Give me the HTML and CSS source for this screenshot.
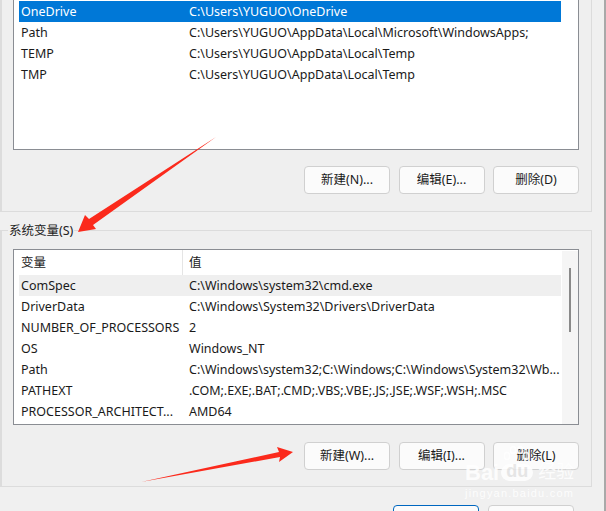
FILE: index.html
```html
<!DOCTYPE html>
<html lang="zh">
<head>
<meta charset="utf-8">
<title>环境变量</title>
<link rel="stylesheet" href="styles.css">
</head>
<body>
<div class="dialog">
  <section class="group group-user">
    <div class="list list-user">
      <div class="row selected"><span class="name">OneDrive</span><span class="value">C:\Users\YUGUO\OneDrive</span></div>
      <div class="row"><span class="name">Path</span><span class="value">C:\Users\YUGUO\AppData\Local\Microsoft\WindowsApps;</span></div>
      <div class="row"><span class="name">TEMP</span><span class="value">C:\Users\YUGUO\AppData\Local\Temp</span></div>
      <div class="row"><span class="name">TMP</span><span class="value">C:\Users\YUGUO\AppData\Local\Temp</span></div>
    </div>
    <div class="actions">
      <button class="btn">新建(N)...</button>
      <button class="btn">编辑(E)...</button>
      <button class="btn">删除(D)</button>
    </div>
  </section>
  <section class="group group-system">
    <div class="legend">系统变量(S)</div>
    <div class="list list-system">
      <div class="rows">
        <div class="header"><span class="name">变量</span><span class="value">值</span></div>
        <div class="row hover"><span class="name">ComSpec</span><span class="value">C:\Windows\system32\cmd.exe</span></div>
        <div class="row"><span class="name">DriverData</span><span class="value">C:\Windows\System32\Drivers\DriverData</span></div>
        <div class="row"><span class="name">NUMBER_OF_PROCESSORS</span><span class="value">2</span></div>
        <div class="row"><span class="name">OS</span><span class="value">Windows_NT</span></div>
        <div class="row"><span class="name">Path</span><span class="value">C:\Windows\system32;C:\Windows;C:\Windows\System32\Wb...</span></div>
        <div class="row"><span class="name">PATHEXT</span><span class="value">.COM;.EXE;.BAT;.CMD;.VBS;.VBE;.JS;.JSE;.WSF;.WSH;.MSC</span></div>
        <div class="row"><span class="name">PROCESSOR_ARCHITECT...</span><span class="value">AMD64</span></div>
      </div>
      <div class="scrollbar"><div class="thumb"></div></div>
    </div>
    <div class="actions">
      <button class="btn">新建(W)...</button>
      <button class="btn">编辑(I)...</button>
      <button class="btn">删除(L)</button>
    </div>
  </section>
  <div class="footer">
    <button class="btn primary"></button>
    <button class="btn"></button>
  </div>
</div>
<svg class="arrows" width="606" height="511" viewBox="0 0 606 511" aria-hidden="true">
  <path class="arrow" d="M216 137 L89 219 L85 215 L78 232 L96 229 L93 225 Z"/>
  <path class="arrow" d="M141 482 L279 452 L277 447 L293 452 L279 462 L280 457 Z"/>
</svg>
<div class="watermark" aria-hidden="true">
  <svg class="paw" width="30" height="24" viewBox="0 0 30 24"><g fill="none" stroke="#fff" stroke-width="1.6"><ellipse cx="6" cy="10" rx="2.6" ry="3.6"/><ellipse cx="12" cy="4" rx="2.6" ry="3.4"/><ellipse cx="19" cy="4" rx="2.6" ry="3.4"/><ellipse cx="25" cy="10" rx="2.6" ry="3.6"/></g></svg>
  <div class="wm-main"><span class="wm-bai">Bai</span><span class="wm-du">du</span><span class="wm-cn">经验</span></div>
  <div class="wm-sub">jingyan.baidu.com</div>
</div>
</body>
</html>
```
FILE: styles.css
```css
* { box-sizing: border-box; }
html, body { margin: 0; padding: 0; }
body {
  width: 606px;
  height: 511px;
  overflow: hidden;
  background: #f0f0f0;
  font-family: "Noto Sans", "Noto Sans CJK SC", sans-serif;
  font-size: 12.5px;
  color: #1a1a1a;
  position: relative;
}
.dialog {
  width: 606px;
  height: 511px;
  display: flex;
  flex-direction: column;
  border-right: 2px solid #a9a9a9;
}
.group {
  flex: none;
  width: 592px;
  background: #efefef;
  border: 1px solid #dcdcdc;
  border-left-width: 2px;
  padding: 0 12px 0 11px;
  position: relative;
}
.group-user { height: 213px; margin-top: -1px; border-top: 0; }
.group-system { height: 257px; margin-top: 18px; padding-top: 18px; }
.legend {
  position: absolute;
  left: 6px;
  top: -7px;
  background: #f0f0f0;
  padding: 0 1px;
  line-height: 14px;
  color: #222;
}
.list { width: 566px; background: #fff; border: 1px solid #8a8d93; }
.list-user { height: 151px; padding: 2px 17px 0 5px; border-top: 0; }
.list-system { height: 176px; display: flex; }
.rows { width: 547px; padding: 0 0 0 5px; }
.row, .header { display: flex; height: 21px; line-height: 21px; white-space: nowrap; }
.row span, .header span { display: block; }
.header { height: 25px; line-height: 25px; }
.name { width: 163px; padding-left: 2px; flex: none; }
.value { padding-left: 7px; }
.header .value { border-left: 1px solid #e5e5e5; padding-left: 6px; }
.selected { background: #0078d7; color: #fff; }
.hover { background: #efefef; }
.scrollbar { width: 16px; margin-left: auto; margin-top: 1px; background: #f5f5f5; padding: 17px 0 0 7px; }
.thumb { width: 2px; height: 64px; background: #8a8a8a; }
.actions { display: flex; justify-content: flex-end; gap: 8.5px; margin-top: 16px; width: 566px; }
.group-system .actions { margin-top: 17px; }
.btn {
  flex: none;
  width: 86px;
  height: 28px;
  padding: 0;
  background: #fbfbfb;
  border: 1px solid #d0d0d0;
  border-radius: 4px;
  font: inherit;
  line-height: 14px;
  color: #1a1a1a;
}
.footer { flex: none; display: flex; gap: 9px; margin: 18px 0 0 393px; }
.primary { border: 1px solid #0067c0; }
.arrows { position: absolute; left: 0; top: 0; }
.arrow { fill: #fb2a1c; }
.watermark { position: absolute; left: 465px; top: 445px; width: 110px; height: 56px; color: #fff; opacity: .85; }
.paw { position: absolute; left: 36px; top: 1px; }
.wm-main {
  position: absolute;
  left: 0;
  top: 19px;
  display: flex;
  align-items: center;
  height: 17px;
  white-space: nowrap;
  font: bold 22px/17px "Liberation Sans", "Noto Sans CJK SC", sans-serif;
}
.wm-du {
  margin-left: 2px;
  padding: 0 5px;
  height: 17px;
  line-height: 15px;
  font-size: 18px;
  background: #fff;
  color: #e4e4e4;
  border-radius: 9px;
}
.wm-cn { margin-left: 5px; font-size: 18px; font-weight: 400; }
.wm-sub {
  position: absolute;
  left: 0;
  top: 41px;
  font: 11px/14px "Liberation Sans", sans-serif;
  letter-spacing: 1.2px;
  white-space: nowrap;
}
```
